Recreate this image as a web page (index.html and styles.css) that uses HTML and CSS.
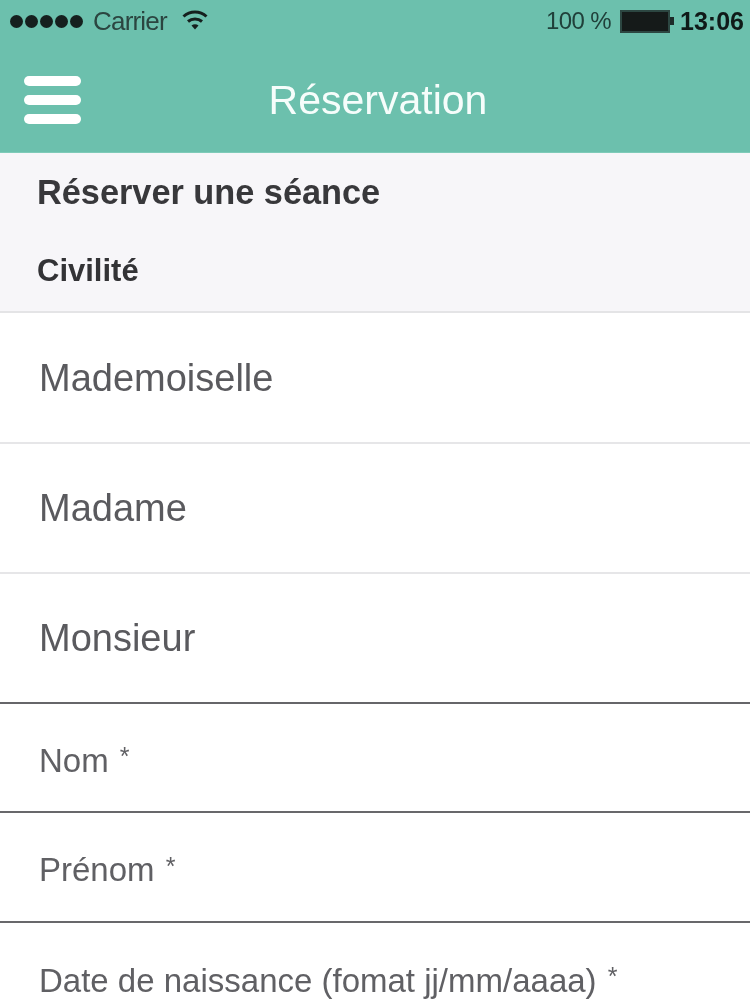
FILE: index.html
```html
<!DOCTYPE html>
<html lang="fr">
<head>
<meta charset="utf-8">
<title>Réservation</title>
<link rel="stylesheet" href="styles.css">
</head>
<body>
<header class="appbar">
  <div class="status">
    <div class="status-left">
      <span class="dots"><i></i><i></i><i></i><i></i><i></i></span>
      <span class="carrier">Carrier</span>
      <svg class="wifi" width="28" height="24" viewBox="0 0 28 24"><path d="M2.5 7.5C9 1.5 19 1.5 25.5 7.5" fill="none" stroke="#15201e" stroke-width="3"/><path d="M7 12.5C11 9 17 9 21 12.5" fill="none" stroke="#15201e" stroke-width="3"/><path d="M10.5 16.5L14 20.5L17.5 16.5C15.5 14.8 12.5 14.8 10.5 16.5Z" fill="#15201e"/></svg>
    </div>
    <div class="status-right">
      <span class="percent">100 %</span>
      <span class="battery"><span class="battery-body"></span><span class="battery-tip"></span></span>
      <span class="time">13:06</span>
    </div>
  </div>
  <div class="navbar">
    <div class="burger"><i></i><i></i><i></i></div>
    <h1 class="title">Réservation</h1>
  </div>
</header>
<main>
  <section class="intro">
    <h2 class="heading">Réserver une séance</h2>
    <h3 class="subheading">Civilité</h3>
  </section>
  <ul class="options">
    <li>Mademoiselle</li>
    <li>Madame</li>
    <li>Monsieur</li>
  </ul>
  <div class="fields">
    <div class="field">Nom <span class="star">*</span></div>
    <div class="field">Prénom <span class="star">*</span></div>
    <div class="field field-last">Date de naissance (fomat jj/mm/aaaa) <span class="star">*</span></div>
  </div>
</main>
</body>
</html>
```
FILE: styles.css
```css
* { box-sizing: border-box; }
html, body { margin: 0; padding: 0; }
body {
  width: 750px;
  height: 1000px;
  overflow: hidden;
  background: #fff;
  font-family: "Liberation Sans", Arial, sans-serif;
  color: #555558;
}
.appbar, main { filter: blur(0.6px); }
.appbar { height: 153px; background: #6cc0ad; border-bottom: 1px solid #7fcbb9; }
.status {
  height: 44px;
  display: flex;
  justify-content: space-between;
  align-items: center;
  padding: 0 6px 2px 10px;
  color: #1d2b29;
  font-size: 24px;
}
.status-left, .status-right { display: flex; align-items: center; }
.dots { display: flex; gap: 2px; margin-right: 10px; }
.dots i { width: 13px; height: 13px; border-radius: 50%; background: #15201e; }
.carrier { font-size: 26px; letter-spacing: -0.8px; margin-right: 14px; color: #2b4540; }
.wifi { margin-top: 0; }
.percent { color: #20403a; letter-spacing: -0.6px; margin-right: 9px; }
.battery { display: flex; align-items: center; margin-right: 6px; }
.battery-body { width: 50px; height: 23px; background: #151a19; border: 2px solid #2c4641; }
.battery-tip { width: 4px; height: 8px; background: #1d2b29; }
.time { font-weight: 700; color: #0f1a18; font-size: 25px; }
.navbar { height: 108px; position: relative; display: flex; align-items: center; justify-content: center; padding-top: 5px; }
.title { margin: 0 0 0 6px; color: #f6fdfb; font-size: 41px; font-weight: 400; }
.burger {
  position: absolute;
  left: 24px;
  top: 32px;
  display: flex;
  flex-direction: column;
  gap: 9px;
}
.burger i { width: 57px; height: 10px; border-radius: 5px; background: #fff; }
.intro {
  height: 160px;
  background: #f7f6f9;
  border-bottom: 2px solid #e4e4e6;
  padding: 20px 37px 0;
  color: #333336;
}
.heading { margin: 0; font-size: 34.3px; line-height: 38px; font-weight: 700; color: #38383b; }
.subheading { margin: 42px 0 0; font-size: 31px; line-height: 36px; font-weight: 700; color: #333336; }
.options { list-style: none; margin: 0; padding: 0; }
.options li {
  height: 130.5px;
  padding: 2px 0 0 39px;
  display: flex;
  align-items: center;
  font-size: 38px;
  color: #5a5a5e;
  border-bottom: 2px solid #e6e6e8;
}
.options li:last-child { height: 129.5px; border-bottom: 2px solid #666669; }
.field {
  height: 109.5px;
  padding: 7px 0 0 39px;
  display: flex;
  align-items: center;
  font-size: 33px;
  color: #606064;
  border-bottom: 2px solid #68686b;
  white-space: pre;
}
.star { font-size: 25px; margin: -8px 0 0 2px; }
.field-last { border-bottom: 0; }
```
